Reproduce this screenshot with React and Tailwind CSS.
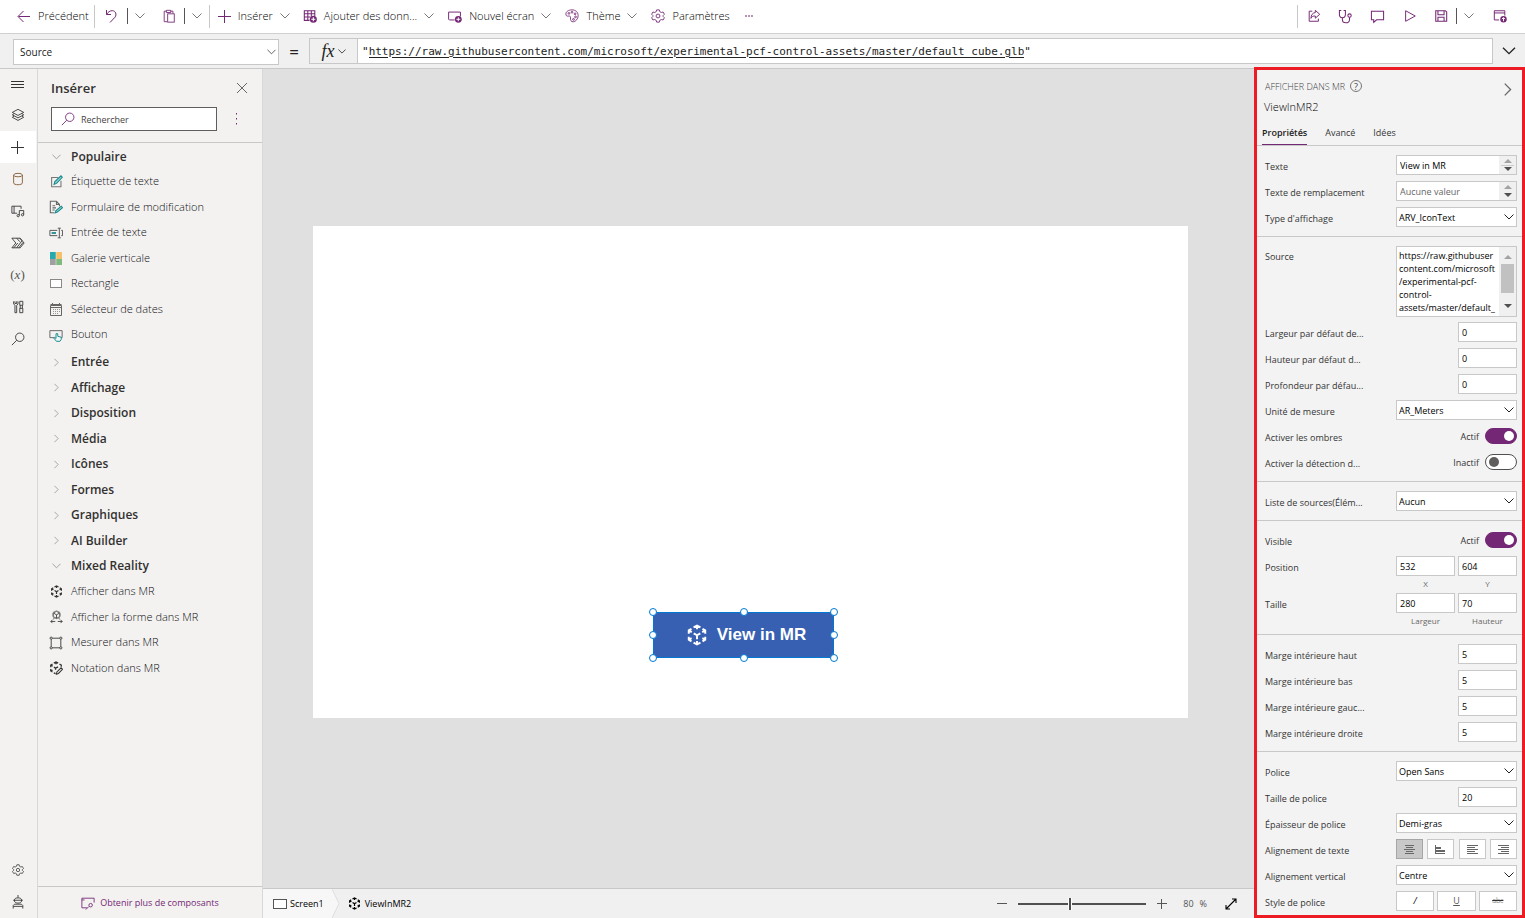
import React, { useState } from "react";

function Svg({ className = "w-4 h-4", children, width = 1, box = "0 0 16 16" }) {
  return (
    <svg
      viewBox={box}
      className={`shrink-0 ${className}`}
      fill="none"
      stroke="currentColor"
      strokeWidth={width}
      aria-hidden="true"
    >
      {children}
    </svg>
  );
}

const ChevronDown = ({ className = "w-[10px] h-[6px]", width = 1 }) => (
  <Svg className={className} box="0 0 10 6" width={width}>
    <path d="M.5.5 5 5 9.500.5" />
  </Svg>
);

const ChevronRight = ({ className = "w-[6px] h-[10px]" }) => (
  <Svg className={className} box="0 0 6 10">
    <path d="M.5.5 5 5 .5 9.500" />
  </Svg>
);

const CubeIcon = ({ className = "w-[14px] h-[14px]", width = 1.5 }) => (
  <Svg className={className} width={width}>
    <path d="M5.500 2.500 8 1.200 10.500 2.500M8 1.200V3.800M12 3.500 14 4.600V7M14 4.600 11.800 5.900M14 9.200V11.400L12 12.600M14 11.400 11.900 10.300M10.500 13.500 8 14.800 5.500 13.500M8 14.800V12.400M4 12.600 2 11.400V9.200M2 11.400 4.100 10.300M2 7V4.600L4 3.500M2 4.600 4.200 5.900M8 11V8.200L5.600 6.800M8 8.200 10.400 6.800" />
  </Svg>
);

const GearIcon = ({ className = "w-[14px] h-[14px]" }) => (
  <Svg className={className}>
    <path
      strokeLinejoin="round"
      d="M6.500 1h3l.5 2 1.800 1 2-.6 1.500 2.600-1.500 1.500v1l1.500 1.500-1.500 2.600-2-.6-1.800 1-.5 2h-3l-.5-2-1.800-1-2 .6L.7 10l1.500-1.500v-1L.7 6l1.500-2.600 2 .6L6 3z"
    />
    <circle cx="8" cy="8" r="2.200" />
  </Svg>
);

const SearchIcon = ({ className = "w-[14px] h-[14px]" }) => (
  <Svg className={className}>
    <circle cx="10" cy="6" r="4.800" />
    <path d="M6.600 9.400 1 15" />
  </Svg>
);

const PlusIcon = ({ className = "w-[13px] h-[13px]" }) => (
  <Svg className={className} box="0 0 13 13">
    <path d="M6.500 0v13M0 6.500h13" />
  </Svg>
);

const ScreenIcon = () => (
  <Svg className="w-[14px] h-[12px]" box="0 0 14 12">
    <rect x=".5" y="1.500" width="13" height="9" fill="#fff" />
  </Svg>
);

const toolbarIcons = {
  back: (
    <Svg className="w-[14px] h-[14px]" box="0 0 14 14">
      <path d="M13 7.500H1.500M6.500 2 1 7.500 6.500 13" />
    </Svg>
  ),
  undo: (
    <Svg className="w-[12px] h-[14px]" box="0 0 12 14">
      <path d="M1.500 1v4.500H6M1.700 5.300C3 3 5 1.700 7.200 1.700c3.500 0 4.800 3.800 2.800 6.500L5 13.500" />
    </Svg>
  ),
  paste: (
    <Svg className="w-[14px] h-[14px]">
      <path d="M6 14.500H2.500v-12H5M10 2.500h2.500V5M5 1.500h5v2.500H5z" />
      <rect x="6.500" y="5.500" width="7.500" height="9.500" />
    </Svg>
  ),
  table: (
    <Svg className="w-[14px] h-[14px]" width={1.2}>
      <path d="M7.500 13H1.500V2h12v6M1.500 5.500h12M1.500 9.200h7M5.500 2v11M9.500 2v6.500" />
      <circle cx="11.800" cy="11.800" r="4" fill="currentColor" stroke="none" />
      <path d="M11.800 9.500v4.600M9.500 11.800h4.600" stroke="#fff" />
    </Svg>
  ),
  screen: (
    <Svg className="w-[14px] h-[14px]" width={1.1}>
      <path d="M7.500 12.500h-6l-.8-.8V3.500h13.500v5" />
      <circle cx="11.800" cy="11.800" r="3.900" fill="currentColor" stroke="none" />
      <path d="M11.800 9.600v4.400M9.600 11.800h4.400" stroke="#fff" />
    </Svg>
  ),
  theme: (
    <Svg className="w-[14px] h-[14px]">
      <path d="M8 1C4 1 1 3 1 5.800c0 2 1.500 2.600 3 2.300 1.600-.4 2.500.4 2.300 2C6 12.600 7 15 9.500 14.600 12.800 14 15 11 15 7.500 15 3.500 12 1 8 1z" />
      <circle cx="4.500" cy="5" r="1" />
      <circle cx="8" cy="3.700" r="1" />
      <circle cx="11.500" cy="5.500" r="1" />
      <circle cx="12" cy="9" r="1" />
      <circle cx="9.700" cy="11.800" r="1" />
    </Svg>
  ),
  share: (
    <Svg className="w-[14px] h-[14px]" width={1.1}>
      <path d="M6 2.500H2.500v11.500h10.500v-3M9.500 1.500 14.500 6l-5 4.500V8C7 7.800 5.500 8.700 4.500 10.700 4.700 6.800 6.300 4.400 9.500 4.100z" />
    </Svg>
  ),
  checker: (
    <Svg className="w-[15px] h-[15px]" width={1.1}>
      <path d="M3.500 1.500H1.500v4c0 2.500 1.300 3.800 3.200 3.800s3.200-1.300 3.200-3.800v-4H6M4.700 9.300v2.200c0 4.300 7.600 4.300 7.600 0V8.800" />
      <circle cx="12.300" cy="7" r="1.800" />
    </Svg>
  ),
  comment: (
    <Svg className="w-[15px] h-[15px]" width={1.1}>
      <path d="M1.500 2.500h13v9H7L4 14.300v-2.800H1.500z" />
    </Svg>
  ),
  play: (
    <Svg className="w-[14px] h-[14px]" width={1.1}>
      <path d="M3 2 14 8 3 14z" />
    </Svg>
  ),
  save: (
    <Svg className="w-[14px] h-[14px]" width={1.2}>
      <path d="M2 2h11l1.500 1.500V14H2zM4.500 2v4.500h7V2M4.500 14V9.500h7V14" />
    </Svg>
  ),
  publish: (
    <Svg className="w-[14px] h-[14px]" width={1.1}>
      <path d="M7 12.500H1.500V2h12v5.500M1.500 4.500h12" />
      <circle cx="12" cy="11.800" r="3.700" fill="currentColor" stroke="none" />
      <path d="M12 14V10M10.200 11.600 12 9.800l1.800 1.800" stroke="#fff" />
    </Svg>
  ),
};

const railIcons = [
  {
    name: "Menu",
    icon: (
      <Svg className="w-[13px] h-[9px]" box="0 0 13 9">
        <path d="M0 1.500h13M0 4.500h13M0 7.500h13" />
      </Svg>
    ),
  },
  {
    name: "Arborescence",
    icon: (
      <Svg className="w-[14px] h-[14px]">
        <path d="M8 1.500 14.500 5 8 8.500 1.500 5zM3.500 6.500l-2 1.300L8 11.300l6.500-3.500-2-1.300M3.500 9.400l-2 1.200L8 14.200l6.500-3.600-2-1.200" />
      </Svg>
    ),
  },
  { name: "Insérer", icon: <PlusIcon /> },
  {
    name: "Données",
    icon: (
      <Svg className="w-[14px] h-[14px]" width={1.1}>
        <ellipse cx="8" cy="3.500" rx="5" ry="2" stroke="#8a6540" />
        <path d="M3 3.500v9c0 2.700 10 2.700 10 0v-9" stroke="#8a6540" />
      </Svg>
    ),
  },
  {
    name: "Média",
    icon: (
      <Svg className="w-[14px] h-[14px]">
        <path d="M7 10.500H1V2.500h10.500v3M3.500 2.500v8M9.500 13V7.500h5V12" />
        <circle cx="8.200" cy="13.300" r="1.300" />
        <circle cx="13.200" cy="12.300" r="1.300" />
      </Svg>
    ),
  },
  {
    name: "Power Automate",
    icon: (
      <Svg className="w-[14px] h-[14px]">
        <path d="M1 2.500h9.500L15 8l-4.500 5.500H1L5.500 8zM6.500 2.500 10 6.500M7.800 8 3.300 13.500M10 2.500 12.500 5.500 6.500 13.500M14 7 9 13.500" />
      </Svg>
    ),
  },
  {
    name: "Variables",
    icon: <span className="pb-px font-['Liberation_Serif',serif] text-[13px] leading-none text-[#555]">(<i>x</i>)</span>,
  },
  {
    name: "Outils avancés",
    icon: (
      <Svg className="w-[14px] h-[14px]">
        <path d="M3 1.500V4.500L4.500 6v8.500h2V6L8 4.500v-3M4.500 1.500V4h2V1.500M10 1.500h3.500V6H10zM10.500 6v3.500M13 6v3.500M10 9.500h3.500v5H10z" />
      </Svg>
    ),
  },
  { name: "Rechercher", icon: <SearchIcon /> },
];

const itemIcons = {
  label: (
    <Svg className="w-[13px] h-[13px]" width={1.3}>
      <path d="M10 3H2v11.500h11.500V7" stroke="#777" />
      <path d="M5 11.500 6 8l7.500-7 1.700 1.800L8 10.300z" stroke="#16898c" fill="#8ed1d2" />
    </Svg>
  ),
  form: (
    <Svg className="w-[14px] h-[14px]" width={1.2}>
      <path d="M6 14.500H1.500v-13h7L12 5v2M8.500 1.500V5H12M4 6.500h3M4 9h4M4 11.500h2.500" stroke="#666" />
      <path d="M7 14.800 8 12l6-5 1.500 1.800-6 5z" stroke="#16898c" fill="#8ed1d2" />
    </Svg>
  ),
  input: (
    <Svg className="w-[14px] h-[14px]" width={1.1}>
      <path d="M9.500 5H1v6h8.500M14 5h1.500v6H14M10 2.500h3.500M10 13.500h3.500M11.800 2.500v11" stroke="#555" />
      <path d="M3 8h5" stroke="#16898c" strokeWidth="2" />
    </Svg>
  ),
  gallery: (
    <Svg className="w-[12px] h-[13px]" box="0 0 12 13">
      <path d="M0 0h6v7H0z" fill="#28a9ab" stroke="none" />
      <path d="M6 0h6v7H6z" fill="#f8bf6a" stroke="none" />
      <path d="M0 7h6v6H0z" fill="#a0a0a0" stroke="none" />
      <path d="M6 7h6v6H6z" fill="#7fba7f" stroke="none" />
      <path d="M6 0v13" stroke="#f3f2f1" strokeWidth=".5" />
    </Svg>
  ),
  rectangle: (
    <Svg className="w-[12px] h-[11px]" box="0 0 12 11">
      <rect x=".5" y="1.500" width="11" height="8" stroke="#888" fill="#fff" />
    </Svg>
  ),
  date: (
    <Svg className="w-[12px] h-[13px]" box="0 0 12 13">
      <path d="M.5 2.500h11v10H.5zM.5 1.500h11M2.500 0v3M9.500 0v3M.5 4.500h11" stroke="#666" />
      <path d="M3 6.500h7M3 8.500h7M3 10.500h5" stroke="#999" strokeDasharray="1 1" />
    </Svg>
  ),
  button: (
    <Svg className="w-[14px] h-[14px]" width={1.1}>
      <path d="M6 11H1V3h14v8h-1" stroke="#666" />
      <path d="M8.500 15.200 5.500 11.500l1-.8 1.500 1.300V6.500h2V9.500l4 1v2.500l-1.500 2.200z" stroke="#16898c" fill="#eef7f7" />
    </Svg>
  ),
  cube: <CubeIcon className="w-[13px] h-[13px]" />,
  shape: (
    <Svg className="w-[13px] h-[14px]">
      <path d="M8 1 12 3v4.500L8 9.700 4 7.500V3zM4 3 8 5.300 12 3M8 5.300v4.400M5 9.500 4 11M11 9.500l1 1.500M6.500 13.500H1M3 11.500l-2 2 2 2M9.500 13.500H15M13 11.500l2 2-2 2" />
      <circle cx="8" cy="5.300" r="4.800" stroke="#888" />
    </Svg>
  ),
  measure: (
    <Svg className="w-[14px] h-[14px]">
      <path d="M4 2.500h8M4 13.500h8M2.500 4v8M13.500 4v8" />
      <circle cx="2.500" cy="2.500" r="1.300" />
      <circle cx="13.500" cy="2.500" r="1.300" />
      <circle cx="2.500" cy="13.500" r="1.300" />
      <circle cx="13.500" cy="13.500" r="1.300" />
    </Svg>
  ),
  markup: (
    <Svg className="w-[14px] h-[14px]" width={1.5}>
      <path d="M5.500 2.500 8 1.200 10.500 2.500M8 1.200V3.800M12 3.500 14 4.600V6.500M7.500 14.500 5.500 13.500M4 12.600 2 11.400V9.200M2 11.400 4.100 10.300M2 7V4.600L4 3.500M2 4.600 4.200 5.900M7.500 10V8.200L5.600 6.800M7.500 8.200 10.400 6.800" />
      <path d="M8.500 15 9 12.500l4.800-4.700 1.700 1.700-4.700 4.700z" strokeWidth="1.200" />
    </Svg>
  ),
};

const categories = [
  {
    name: "Populaire",
    items: [
      { label: "Étiquette de texte", icon: "label" },
      { label: "Formulaire de modification", icon: "form" },
      { label: "Entrée de texte", icon: "input" },
      { label: "Galerie verticale", icon: "gallery" },
      { label: "Rectangle", icon: "rectangle" },
      { label: "Sélecteur de dates", icon: "date" },
      { label: "Bouton", icon: "button" },
    ],
  },
  { name: "Entrée" },
  { name: "Affichage" },
  { name: "Disposition" },
  { name: "Média" },
  { name: "Icônes" },
  { name: "Formes" },
  { name: "Graphiques" },
  { name: "AI Builder" },
  {
    name: "Mixed Reality",
    items: [
      { label: "Afficher dans MR", icon: "cube" },
      { label: "Afficher la forme dans MR", icon: "shape" },
      { label: "Mesurer dans MR", icon: "measure" },
      { label: "Notation dans MR", icon: "markup" },
    ],
  },
];

function Toolbar() {
  const line = <span className="w-px h-[23px] bg-[#c8c8c8]" />;
  const split = <span className="w-px h-4 bg-[#555]" />;
  const purple = "text-[#742774]";
  const chevron = <span className="text-[#777]"><ChevronDown /></span>;

  return (
    <header className="flex items-center justify-between h-[34px] pb-px bg-white border-b border-[#d0d0d0] text-[11px] font-light text-black whitespace-nowrap">
      <div className="flex items-center pl-[17px]">
        <button className="flex items-center gap-[7px] mr-[5px]">
          <span className={purple}>{toolbarIcons.back}</span>Précédent
        </button>
        {line}
        <button aria-label="Annuler" className={`mx-[10px] ${purple}`}>{toolbarIcons.undo}</button>
        {split}
        <button aria-label="Plus d'annulations" className="mx-[7px]">{chevron}</button>
        <button aria-label="Coller" className={`ml-[10px] mr-[8px] ${purple}`}>{toolbarIcons.paste}</button>
        {split}
        <button aria-label="Options de collage" className="mx-[7px]">{chevron}</button>
        {line}
        <button className="flex items-center gap-[7px] ml-[8px]">
          <span className={purple}><PlusIcon /></span>Insérer{chevron}
        </button>
        <button className="flex items-center gap-[7px] ml-[13px]">
          <span className={purple}>{toolbarIcons.table}</span>Ajouter des donn...{chevron}
        </button>
        <button className="flex items-center gap-[7px] ml-[14px]">
          <span className={purple}>{toolbarIcons.screen}</span>Nouvel écran{chevron}
        </button>
        <button className="flex items-center gap-[7px] ml-[14px]">
          <span className={purple}>{toolbarIcons.theme}</span>Thème{chevron}
        </button>
        <button className="flex items-center gap-[7px] ml-[14px]">
          <span className={purple}><GearIcon /></span>Paramètres
        </button>
        <button aria-label="Plus" className={`ml-[14px] ${purple}`}>
          <Svg className="w-[10px] h-[2px]" box="0 0 10 2">
            <path d="M1 1h2M4 1h2M7 1h2" />
          </Svg>
        </button>
      </div>

      <div className={`flex items-center pr-[18px] ${purple}`}>
        {line}
        <button aria-label="Partager" className="ml-[9px]">{toolbarIcons.share}</button>
        <button aria-label="Vérificateur" className="ml-[17px]">{toolbarIcons.checker}</button>
        <button aria-label="Commentaires" className="ml-[17px]">{toolbarIcons.comment}</button>
        <button aria-label="Aperçu" className="ml-[18px]">{toolbarIcons.play}</button>
        <button aria-label="Enregistrer" className="ml-[17px] mr-[8px]">{toolbarIcons.save}</button>
        {split}
        <button aria-label="Options d'enregistrement" className="mx-[7px]">{chevron}</button>
        <button aria-label="Publier" className="ml-[12px]">{toolbarIcons.publish}</button>
      </div>
    </header>
  );
}

function FormulaBar() {
  return (
    <div className="flex items-center h-[34px] pl-[13px] bg-[#f0f0f0] text-[#222]">
      <div className="relative w-[266px] mt-px">
        <select aria-label="Propriété" className="appearance-none block w-full h-[26px] pl-[6px] pt-px bg-white border border-[#c8c8c8] text-[10px]">
          <option>Source</option>
        </select>
        <ChevronDown className="absolute right-[3px] top-[10px] w-[9px] h-[6px] text-[#555] pointer-events-none" />
      </div>
      <span className="w-[30px] text-center text-[17px] leading-none">=</span>
      <button aria-label="Fonction" className="flex items-center justify-center gap-[3px] w-[49px] h-[26px] border border-[#c8c8c8]">
        <i className="font-['Liberation_Serif',serif] text-[18px] leading-none">fx</i>
        <ChevronDown className="w-[8px] h-[5px]" />
      </button>
      <div className="flex flex-1 items-center h-[26px] px-[4px] pt-[2px] bg-white border border-l-0 border-[#c8c8c8] font-['DejaVu_Sans_Mono',monospace] text-[11px]">
        <span>"</span>
        <input
          aria-label="Formule"
          className="field-sizing-content underline underline-offset-2 outline-none"
          defaultValue="https://raw.githubusercontent.com/microsoft/experimental-pcf-control-assets/master/default_cube.glb"
        />
        <span>"</span>
      </div>
      <button aria-label="Développer la barre de formule" className="flex justify-center w-[32px]">
        <ChevronDown className="w-[14px] h-[8px]" />
      </button>
    </div>
  );
}

function Rail() {
  return (
    <nav className="flex flex-col w-[38px] shrink-0 bg-[#f3f2f1] border-r border-[#d8d8d8] text-[#333]">
      {railIcons.map((item) => (
        <button
          key={item.name}
          aria-label={item.name}
          className={`flex items-center justify-center w-9 h-8 pr-px first:h-[30px] ${item.name === "Insérer" ? "bg-white" : ""}`}
        >
          {item.icon}
        </button>
      ))}
      <button aria-label="Paramètres" className="flex items-center justify-center w-9 h-8 mt-auto">
        <GearIcon className="w-[12px] h-[12px]" />
      </button>
      <button aria-label="Assistant virtuel" className="flex items-center justify-center w-9 h-8">
        <Svg className="w-[14px] h-[14px]">
          <path d="M8 0v3M4 5.500C4 2.500 12 2.500 12 5.500V7c0 3-8 3-8 0zM2.500 6h11M2.500 15.500V12L4 10.500h8l1.500 1.500v3.500M2.500 13h11" />
        </Svg>
      </button>
    </nav>
  );
}

function InsertPanel() {
  const [open, setOpen] = useState(["Populaire", "Mixed Reality"]);

  const toggle = (name) => {
    setOpen(open.includes(name) ? open.filter((n) => n !== name) : [...open, name]);
  };

  return (
    <section className="flex flex-col w-[225px] shrink-0 bg-[#f3f2f1] border-r border-[#d8d8d8] text-[#323130]">
      <div className="flex items-center justify-between pl-[13px] pr-[15px] pt-[6px] h-[31px]">
        <h2 className="pt-[2px] text-[13px] font-semibold">Insérer</h2>
        <button aria-label="Fermer" className="text-[#666]">
          <Svg className="w-[10px] h-[10px]" box="0 0 10 10">
            <path d="M0 0l10 10M10 0 0 10" />
          </Svg>
        </button>
      </div>
      <div className="flex items-center pl-[13px] pt-[7px] pb-[11px] border-b border-[#c8c8c8]">
        <label className="flex items-center gap-[6px] w-[166px] h-6 pl-[9px] bg-white border border-[#605e5c] text-[#742774]">
          <SearchIcon />
          <input
            type="search"
            aria-label="Rechercher"
            placeholder="Rechercher"
            className="w-full min-w-0 pt-px text-[9px] text-[#323130] placeholder:text-[#444] outline-none"
          />
        </label>
        <button aria-label="Plus d'options" className="ml-[18px] text-[#742774]">
          <Svg className="w-[3px] h-[12px]" box="0 0 3 12">
            <path d="M1.500 0v1.500M1.500 5v1.500M1.500 10v1.500" />
          </Svg>
        </button>
      </div>

      {/* Categories */}
      <div className="flex-1 min-h-0 overflow-hidden pt-px">
        {categories.map((cat) => (
          <div key={cat.name} className="group">
            <button
              onClick={() => toggle(cat.name)}
              className="flex items-center w-full h-[26px] group-odd:h-[25px] pl-[13px] text-[12px] font-semibold"
            >
              <span className="flex w-[10px] justify-center mr-[10px] text-[#999]">
                {open.includes(cat.name) ? <ChevronDown className="w-[9px] h-[6px]" /> : <ChevronRight className="w-[5px] h-[9px]" />}
              </span>
              {cat.name}
            </button>
            {cat.items && open.includes(cat.name) && (
              <ul className="pb-[2px]">
                {cat.items.map((item) => (
                  <li key={item.label} className="h-[26px] odd:h-[25px]">
                    <button className="flex items-center w-full h-full pl-[11px] text-[11px] font-light text-[#111]">
                      <span className="flex w-[14px] justify-center mr-[8px] text-[#333]">{itemIcons[item.icon]}</span>
                      {item.label}
                    </button>
                  </li>
                ))}
              </ul>
            )}
          </div>
        ))}
      </div>

      <button className="flex items-center justify-center gap-[5px] h-8 shrink-0 border-t border-[#c8c8c8] text-[9px] text-[#742774]">
        <Svg className="w-[14px] h-[14px]">
          <path d="M7 13.500H1v-11h14v5M1 4.500h3M5.500 15.500 9 12" />
          <circle cx="11" cy="10.500" r="2" />
        </Svg>
        Obtenir plus de composants
      </button>
    </section>
  );
}

function Handle({ className }) {
  return (
    <span className={`absolute w-2 h-2 -translate-x-1/2 -translate-y-1/2 rounded-full bg-white border border-[#0078d4] ${className}`} />
  );
}

function Canvas() {
  return (
    <main className="flex flex-col flex-1 min-w-0 bg-[#e0e0e0]">
      <div className="flex flex-1 items-center pl-[50px] pr-[66px] pb-[13px]">
        <div className="relative w-full aspect-[875/492] bg-white">
          <div className="absolute left-[340px] top-[386px] w-[181px] h-[46px]">
            <button className="flex items-center justify-center gap-[9px] w-full h-full pl-[5px] pb-px bg-[#3860b2] border border-[#0078d4] text-white font-['Liberation_Sans',sans-serif] text-[17px] font-bold">
              <CubeIcon className="w-[22px] h-[22px]" width={1.4} />
              View in MR
            </button>
            <Handle className="left-0 top-0" />
            <Handle className="left-1/2 top-0" />
            <Handle className="left-full top-0" />
            <Handle className="left-0 top-1/2" />
            <Handle className="left-full top-1/2" />
            <Handle className="left-0 top-full" />
            <Handle className="left-1/2 top-full" />
            <Handle className="left-full top-full" />
          </div>
        </div>
      </div>

      {/* Status bar */}
      <footer className="flex items-center justify-between h-[30px] border-t border-[#c8c8c8] bg-[#f0f0f0] text-[9px] text-black">
        <div className="flex items-center h-full">
          <button className="flex items-center gap-[3px] h-full pl-[10px] pr-[8px] bg-[#f7f7f7]">
            <span className="text-[#555]"><ScreenIcon /></span>Screen1
          </button>
          <Svg className="w-[8px] h-full text-[#dedede]" box="0 0 8 29">
            <path d="M0 0 7 14.500 0 29z" fill="#f7f7f7" stroke="none" />
            <path d="M0 0 7 14.500 0 29" />
          </Svg>
          <button className="flex items-center gap-[4px] ml-[8px]">
            <CubeIcon className="w-[13px] h-[13px]" width={1.5} />ViewInMR2
          </button>
        </div>
        <div className="flex items-center pr-[17px] text-[#555]">
          <button aria-label="Zoom arrière">
            <Svg className="w-[10px] h-[10px]" box="0 0 10 10"><path d="M0 4.500h10" /></Svg>
          </button>
          <input
            type="range"
            aria-label="Zoom"
            defaultValue="40"
            className="appearance-none w-[128px] h-[12px] mx-[11px] bg-transparent [&::-webkit-slider-runnable-track]:h-[2px] [&::-webkit-slider-runnable-track]:bg-[#505050] [&::-webkit-slider-thumb]:appearance-none [&::-webkit-slider-thumb]:w-[4px] [&::-webkit-slider-thumb]:h-[12px] [&::-webkit-slider-thumb]:-mt-[5px] [&::-webkit-slider-thumb]:bg-[#505050] [&::-webkit-slider-thumb]:border-x [&::-webkit-slider-thumb]:border-white"
          />
          <button aria-label="Zoom avant">
            <Svg className="w-[10px] h-[10px]" box="0 0 10 10"><path d="M0 4.500h10M4.500 0v10" /></Svg>
          </button>
          <span className="ml-[16px]">80</span>
          <span className="ml-[6px]">%</span>
          <button aria-label="Ajuster à la fenêtre" className="ml-[18px] text-black">
            <Svg className="w-[12px] h-[12px]" box="0 0 12 12" width={1.1}>
              <path d="M1 11 11 1M7 1h4v4M1 7v4h4" />
            </Svg>
          </button>
        </div>
      </footer>
    </main>
  );
}

const field = "h-5 pt-px bg-white border border-[#c8c8c8] text-[9px] text-black outline-none";

function Row({ id, label, children }) {
  return (
    <div className="flex items-center justify-between h-[26px] pb-[2px]">
      <label htmlFor={id} className="pt-[3px] whitespace-nowrap">{label}</label>
      {children}
    </div>
  );
}

function SelectRow({ id, label, value }) {
  return (
    <Row id={id} label={label}>
      <div className="relative w-[121px]">
        <select id={id} className={`appearance-none block w-full pl-[2px] ${field}`}>
          <option>{value}</option>
        </select>
        <ChevronDown className="absolute right-[3px] top-[7px] w-[10px] h-[6px] text-[#222] pointer-events-none" />
      </div>
    </Row>
  );
}

function NumberRow({ id, label, value }) {
  return (
    <Row id={id} label={label}>
      <input id={id} type="text" defaultValue={value} className={`w-[59px] px-[3px] ${field}`} />
    </Row>
  );
}

function Triangle({ up }) {
  return (
    <svg viewBox="0 0 8 4" className={`w-2 h-1 ${up ? "text-[#a3a3a3]" : "text-[#505050]"}`} fill="currentColor">
      <path d={up ? "M0 4 4 0l4 4z" : "M0 0h8L4 4z"} />
    </svg>
  );
}

function SpinRow({ id, label, divided, ...rest }) {
  return (
    <Row id={id} label={label}>
      <div className="flex w-[121px] h-5 bg-white border border-[#c8c8c8]">
        <input id={id} type="text" className="flex-1 min-w-0 px-[3px] pt-px text-[9px] text-black placeholder:text-[#666] outline-none" {...rest} />
        <div className="flex flex-col items-center justify-between w-[17px] py-[3px] bg-[#f0f0f0]">
          <Triangle up />
          {divided && <span className="w-[13px] h-px bg-[#ccc]" />}
          <Triangle />
        </div>
      </div>
    </Row>
  );
}

function ToggleRow({ id, label, defaultOn }) {
  const [on, setOn] = useState(defaultOn);
  return (
    <Row id={id} label={label}>
      <div className="flex items-center gap-[6px]">
        <span className="pt-px">{on ? "Actif" : "Inactif"}</span>
        <input
          id={id}
          type="checkbox"
          role="switch"
          checked={on}
          onChange={(e) => setOn(e.target.checked)}
          className="flex items-center appearance-none w-8 h-4 px-[3px] rounded-full bg-white border border-[#505050] before:w-[10px] before:h-[10px] before:rounded-full before:bg-[#605e5c] checked:justify-end checked:px-[2px] checked:bg-[#742774] checked:border-[#742774] checked:before:bg-white"
        />
      </div>
    </Row>
  );
}

function PairRow({ label, a, b }) {
  return (
    <div className="flex justify-between">
      <span className="leading-[26px] pt-px h-[26px]">{label}</span>
      <div className="flex gap-[3px] w-[121px]">
        {[a, b].map((f) => (
          <label key={f.caption} className="flex flex-col items-center flex-1 pt-[2px] pb-px text-[8px] leading-[12px] text-[#666]">
            <input type="text" defaultValue={f.value} className={`w-full mb-[2px] px-[3px] ${field}`} />
            {f.caption}
          </label>
        ))}
      </div>
    </div>
  );
}

function Group({ children, className = "pt-[7px] pb-[5px]" }) {
  return <div className={`pl-2 pr-[5px] border-b border-[#c8c8c8] last:border-b-0 last:pb-0 ${className}`}>{children}</div>;
}

const alignments = [
  { name: "Justifier", d: "M1 .5h9M2 2.500h7M0 4.500h11M2 6.500h7M1 8.500h9" },
  { name: "Gauche", d: "M.5 0v9M1 2.500h5M1 3.500h5M1 5.500h9M1 6.500h9M1 8.500h9" },
  { name: "Centre", d: "M0 .5h11M0 2.500h8M0 4.500h11M0 6.500h8M0 8.500h11" },
  { name: "Droite", d: "M0 .5h11M3 2.500h8M0 4.500h11M3 6.500h8M0 8.500h11" },
];

function PropertiesPanel() {
  return (
    <aside className="w-[271px] shrink-0 -mt-px bg-[#f3f3f3] border-[3px] border-[#ed1c24] text-[9px] text-[#333]">
      <div className="pt-2 border-b border-[#c8c8c8]">
        <div className="flex items-center h-4 pl-2 gap-[5px] text-[#444]">
          <span className="font-light pt-px">AFFICHER DANS MR</span>
          <button aria-label="Aide" className="flex items-center justify-center w-3 h-3 rounded-full border border-[#777] text-[9px] leading-none">?</button>
          <button aria-label="Réduire" className="ml-auto mr-[10px] mt-[7px] text-[#666]">
            <ChevronRight className="w-[8px] h-[13px]" />
          </button>
        </div>
        <h3 className="mt-[3px] mb-[2px] pl-[7px] text-[11px] leading-5 font-light text-black">ViewInMR2</h3>
        <div role="tablist" className="flex h-[26px] pl-[5px] gap-[18px]">
          <button role="tab" aria-selected="true" className="font-semibold text-[#222] border-b border-[#742774] pt-[2px]">Propriétés</button>
          <button role="tab" aria-selected="false" className="border-b border-transparent pt-[2px]">Avancé</button>
          <button role="tab" aria-selected="false" className="border-b border-transparent pt-[2px]">Idées</button>
        </div>
      </div>

      <Group>
        <SpinRow id="texte" label="Texte" defaultValue="View in MR" divided />
        <SpinRow id="alt" label="Texte de remplacement" placeholder="Aucune valeur" />
        <SelectRow id="type" label="Type d'affichage" value="ARV_IconText" />
      </Group>

      <Group className="pt-[9px] pb-[5px]">
        <div className="flex justify-between mb-[3px]">
          <label htmlFor="source" className="pt-px leading-5">Source</label>
          <div className="flex w-[121px] h-[71px] bg-white border border-[#c8c8c8]">
            <textarea
              id="source"
              className="flex-1 min-w-0 resize-none overflow-hidden whitespace-pre pl-[2px] pt-[2px] text-[9px] leading-[13px] text-black outline-none"
              defaultValue={"https://raw.githubuser\ncontent.com/microsoft\n/experimental-pcf-\ncontrol-\nassets/master/default_"}
            />
            <div className="flex flex-col items-center w-[17px] py-[8px] bg-[#f0f0f0]">
              <Triangle up />
              <span className="w-[13px] h-[29px] mt-[5px] mb-auto bg-[#c1c1c1]" />
              <Triangle />
            </div>
          </div>
        </div>
        <NumberRow id="largeur" label="Largeur par défaut de..." value="0" />
        <NumberRow id="hauteur" label="Hauteur par défaut d..." value="0" />
        <NumberRow id="profondeur" label="Profondeur par défau..." value="0" />
        <SelectRow id="unite" label="Unité de mesure" value="AR_Meters" />
        <ToggleRow id="ombres" label="Activer les ombres" defaultOn={true} />
        <ToggleRow id="detection" label="Activer la détection d..." defaultOn={false} />
      </Group>

      <Group>
        <SelectRow id="sources" label="Liste de sources(Élém..." value="Aucun" />
      </Group>

      <Group className="pt-[7px] pb-[6px]">
        <ToggleRow id="visible" label="Visible" defaultOn={true} />
        <PairRow label="Position" a={{ value: "532", caption: "X" }} b={{ value: "604", caption: "Y" }} />
        <PairRow label="Taille" a={{ value: "280", caption: "Largeur" }} b={{ value: "70", caption: "Hauteur" }} />
      </Group>

      <Group>
        <NumberRow id="mhaut" label="Marge intérieure haut" value="5" />
        <NumberRow id="mbas" label="Marge intérieure bas" value="5" />
        <NumberRow id="mgauche" label="Marge intérieure gauc..." value="5" />
        <NumberRow id="mdroite" label="Marge intérieure droite" value="5" />
      </Group>

      <Group>
        <SelectRow id="police" label="Police" value="Open Sans" />
        <NumberRow id="taillepolice" label="Taille de police" value="20" />
        <SelectRow id="epaisseur" label="Épaisseur de police" value="Demi-gras" />
        <Row label="Alignement de texte">
          <div className="flex justify-between w-[121px]">
            {alignments.map((a, i) => (
              <button
                key={a.name}
                aria-label={a.name}
                className={`flex items-center justify-center w-[27px] h-5 border ${i === 0 ? "bg-[#c8c8c8] border-[#a6a6a6]" : "bg-white border-[#c8c8c8]"}`}
              >
                <Svg className="w-[11px] h-[9px] text-[#666]" box="0 0 11 9"><path d={a.d} /></Svg>
              </button>
            ))}
          </div>
        </Row>
        <SelectRow id="vertical" label="Alignement vertical" value="Centre" />
        <Row label="Style de police">
          <div className="flex gap-[3px] w-[121px] text-black">
            <button aria-label="Italique" className="flex-1 h-5 bg-white border border-[#c8c8c8] italic">/</button>
            <button aria-label="Souligné" className="flex-1 h-5 bg-white border border-[#c8c8c8] text-[#555] underline">U</button>
            <button aria-label="Barré" className="flex-1 h-5 bg-white border border-[#c8c8c8] text-[7px] text-[#333] font-light line-through">abc</button>
          </div>
        </Row>
      </Group>
    </aside>
  );
}

export default function App() {
  return (
    <div className="flex flex-col h-screen overflow-hidden font-['Open_Sans',sans-serif]">
      <Toolbar />
      <FormulaBar />
      <div className="flex flex-1 min-h-0">
        <div className="flex flex-1 min-w-0 border-t border-[#c8c8c8]">
          <Rail />
          <InsertPanel />
          <Canvas />
        </div>
        <PropertiesPanel />
      </div>
    </div>
  );
}
